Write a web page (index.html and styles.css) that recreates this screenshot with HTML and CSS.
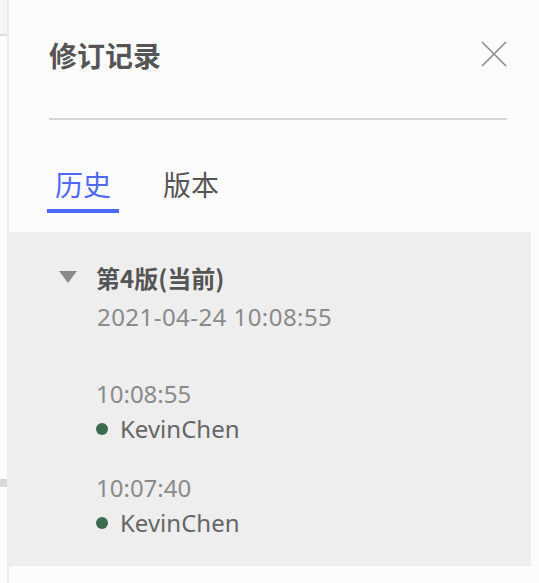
FILE: index.html
```html
<!DOCTYPE html>
<html lang="zh-CN">
<head>
<meta charset="utf-8">
<link rel="stylesheet" href="styles.css">
</head>
<body>
<div class="page">
  <div class="edge">
    <div class="edge-top"></div>
    <div class="edge-mark"></div>
  </div>
  <div class="panel">
    <div class="panel-inner">
      <div class="header">
        <h1 class="title">修订记录</h1>
        <button class="close" aria-label="关闭">
          <svg width="26" height="26" viewBox="0 0 26 26"><path d="M1 1 L25 25 M25 1 L1 25" stroke="#8a8a8a" stroke-width="1.6" fill="none"/></svg>
        </button>
      </div>
      <div class="divider"></div>
      <div class="tabs">
        <div class="tab active">历史</div>
        <div class="tab">版本</div>
      </div>
    </div>
    <div class="history">
      <div class="version-head">
        <span class="caret"></span>
        <span class="version-name">第4版(当前)</span>
      </div>
      <div class="version-date">2021-04-24 10:08:55</div>
      <div class="entries">
        <div class="entry">
          <div class="entry-time">10:08:55</div>
          <div class="entry-user"><span class="dot"></span>KevinChen</div>
        </div>
        <div class="entry">
          <div class="entry-time">10:07:40</div>
          <div class="entry-user"><span class="dot"></span>KevinChen</div>
        </div>
      </div>
    </div>
  </div>
</div>
</body>
</html>
```

FILE: styles.css
```css
* { box-sizing: border-box; }
html, body { margin: 0; padding: 0; }
body {
  background: #fcfcfc;
  font-family: "Noto Sans", "Noto Sans CJK SC", sans-serif;
  width: 539px;
  height: 583px;
  overflow: hidden;
}
.page {
  display: flex;
  height: 583px;
}
.edge {
  width: 9px;
  flex: none;
  border-right: 2px solid #ededed;
  display: flex;
  flex-direction: column;
}
.edge-top {
  height: 36px;
  background: #f5f5f7;
  border-bottom: 2px solid #dcdcdc;
}
.edge-mark {
  margin-top: 443px;
  height: 8px;
  background: #d9d9d9;
}
.panel {
  flex: 1;
  display: flex;
  flex-direction: column;
}
.panel-inner {
  padding: 37px 32px 0 40px;
}
.header {
  display: flex;
  align-items: center;
  justify-content: space-between;
  height: 36px;
}
.title {
  margin: 0;
  font-family: "Noto Sans CJK SC", sans-serif;
  font-size: 28px;
  font-weight: 700;
  color: #555555;
  line-height: 36px;
}
.close {
  border: 0;
  background: none;
  padding: 0;
  width: 26px;
  height: 26px;
  margin-top: -3px;
  display: flex;
}
.divider {
  margin-top: 45px;
  height: 2px;
  background: #d6d6d6;
}
.tabs {
  display: flex;
  gap: 36px;
  margin-top: 46px;
  margin-left: -2px;
}
.tab {
  font-family: "Noto Sans CJK SC", sans-serif;
  font-size: 28px;
  line-height: 36px;
  padding: 0 8px 7px;
  border-bottom: 4px solid transparent;
  color: #555555;
}
.tab.active {
  color: #5169f2;
  border-bottom-color: #4a6cf7;
}
.history {
  margin-top: 19px;
  margin-right: 8px;
  background: #eeeeee;
  padding: 30px 0 27px 50px;
}
.version-head {
  display: flex;
  align-items: center;
  height: 30px;
}
.caret {
  width: 0;
  height: 0;
  border-left: 9.5px solid transparent;
  border-right: 9.5px solid transparent;
  border-top: 12px solid #8a8a8a;
  margin-right: 19px;
}
.version-name {
  font-family: "Noto Sans CJK SC", sans-serif;
  font-size: 24px;
  font-weight: 700;
  color: #555555;
  line-height: 30px;
  margin-top: 2px;
}
.version-date {
  margin-top: 10px;
  margin-left: 38px;
  font-size: 24px;
  line-height: 30px;
  letter-spacing: 0.45px;
  color: #8a8a8a;
}
.entries {
  margin-left: 37px;
  margin-top: 46px;
  display: flex;
  flex-direction: column;
  gap: 27px;
}
.entry-time {
  font-size: 24px;
  line-height: 32px;
  color: #8a8a8a;
}
.entry-user {
  margin-top: 3px;
  display: flex;
  align-items: center;
  font-size: 24px;
  line-height: 32px;
  color: #666666;
}
.dot {
  width: 12px;
  height: 12px;
  border-radius: 50%;
  background: #3d6b50;
  margin-right: 12px;
}
```
